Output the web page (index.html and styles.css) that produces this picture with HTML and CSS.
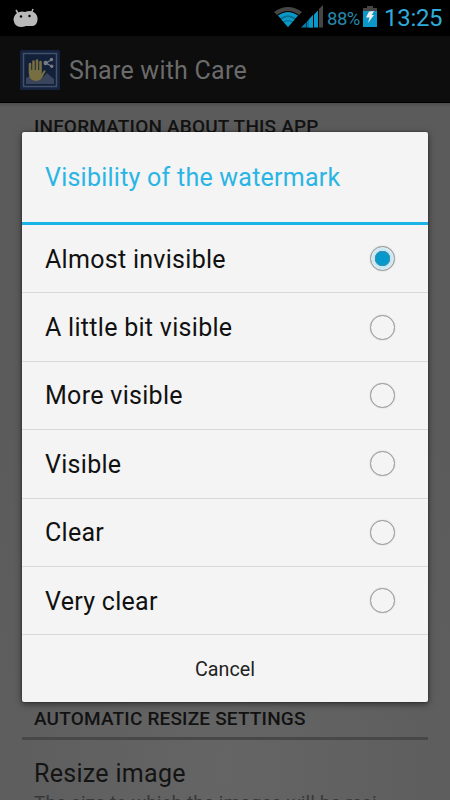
FILE: index.html
```html
<!DOCTYPE html>
<html lang="en">
<head>
<meta charset="utf-8">
<title>Share with Care</title>
<link rel="stylesheet" href="styles.css">
</head>
<body>
<div class="screen">
  <header class="status">
    <svg class="droid" width="26" height="20" viewBox="0 0 26 20"><path d="M3 2l3 5M20 1l-2 5" stroke="#b9b9b9" stroke-width="1.5"/><path d="M4 5Q8 2.500 12 4Q18 1.500 22 5Q25 8 24.500 12Q24 17 20 18H13Q8 20 4 18Q1 16 .5 12Q.5 8 4 5Z" fill="#b9b9b9"/><circle cx="8" cy="8.500" r="1.200"/><circle cx="16.500" cy="8" r="1.200"/></svg>
    <div class="indicators">
      <svg class="wifi" width="28" height="22" viewBox="0 0 28 22"><path d="M0 5Q14-5 28 5L25 8Q14 0 3 8Z" fill="#454545"/><path d="M4 8.500Q14 1.500 24 8.500L19 14.500L14 20L9 14.500Z" fill="#0a6d8e"/><path d="M4 8.500Q14 1.500 24 8.500L21.500 11Q14 5.500 6.500 11Z" fill="#0b98c8"/><path d="M7.500 12.500Q14 7.500 20.500 12.500L18.500 14.500Q14 11.500 9.500 14.500Z" fill="#0b98c8"/><path d="M10 15.500Q14 13 18 15.500L14 20Z" fill="#0b98c8"/></svg>
      <svg class="signal" width="22" height="23" viewBox="0 0 22 23"><path d="M0 22.500L5.500 17V22.500Z" fill="#087ba8"/><path d="M6 16.500L12 10V22.500H6Z" fill="#087ba8"/><path d="M8 14.500L12 10V22.500H8Z" fill="#0b98c8"/><path d="M13 9.500L17 5.500V22.500H13Z" fill="#0b98c8"/><path d="M18 4L22 0V22.500H18Z" fill="#454545"/></svg>
      <span class="percent">88%</span>
      <svg class="battery" width="14" height="21" viewBox="0 0 14 21"><path d="M4 0h6v2h4v3H0V2h4Z" fill="#454545"/><path d="M0 5h14v16H0Z" fill="#0b98c8"/><path d="M6 5.500L11 5L8.800 9H11L5 17L6.500 11.500H3Z" fill="#eee"/></svg>
      <span class="clock">13:25</span>
    </div>
  </header>
  <div class="appbar">
    <svg class="logo" width="40" height="40" viewBox="0 0 40 40"><rect width="40" height="40" rx="1.500" fill="#15233f"/><rect x="3.500" y="3.500" width="33" height="33" fill="#12203a" stroke="#435069" stroke-width="1.500"/><path d="M6 34V28L12 25L21 29L27 23L34 29V34Z" fill="#3a445a"/><path d="M10 23V14M13.500 22V11.500M17 22V10.500M20.500 22V12" stroke="#776e42" stroke-width="2.600" stroke-linecap="round"/><path d="M9 20H21.500V24L24 20.500Q25.500 19.500 25.500 21.500L22 28Q20 31 15.500 31Q9 30 9 24Z" fill="#776e42"/><path d="M32 9.500L26 13L32 16.500" fill="none" stroke="#777c87" stroke-width="1.200"/><circle cx="31.500" cy="9.500" r="1.700" fill="#777c87"/><circle cx="25.700" cy="13" r="2.200" fill="#777c87"/><circle cx="31.700" cy="16.200" r="1.700" fill="#777c87"/></svg>
    <h1>Share with Care</h1>
  </div>
  <main class="settings">
    <h2 class="first">INFORMATION ABOUT THIS APP</h2>
    <section class="resize">
      <h2>AUTOMATIC RESIZE SETTINGS</h2>
      <p class="pref">Resize image</p>
      <p class="desc">The size to which the images will be resi</p>
    </section>
  </main>
  <div class="dialog">
    <h2 class="title">Visibility of the watermark</h2>
    <ul>
      <li><span>Almost invisible</span><i class="radio on"></i></li>
      <li><span>A little bit visible</span><i class="radio"></i></li>
      <li><span>More visible</span><i class="radio"></i></li>
      <li><span>Visible</span><i class="radio"></i></li>
      <li><span>Clear</span><i class="radio"></i></li>
      <li><span>Very clear</span><i class="radio"></i></li>
    </ul>
    <button class="cancel">Cancel</button>
  </div>
</div>
</body>
</html>
```
FILE: styles.css
```css
* { box-sizing: border-box; margin: 0; padding: 0; }
body { font-family: Roboto, "Liberation Sans", sans-serif; background: #000; }
.screen { position: relative; width: 450px; height: 800px; overflow: hidden; display: flex; flex-direction: column; }
.status { height: 36px; flex: none; background: #000; display: flex; justify-content: space-between; padding: 0 9px 0 13px; }
.droid { margin-top: 8px; }
.indicators { display: flex; }
.wifi { margin-top: 7px; }
.signal { margin: 5px 4px 0 -1px; }
.percent { font-size: 18.500px; line-height: 38px; color: #2689ac; width: 34px; letter-spacing: -.5px; }
.battery { margin: 6px 7px 0 2px; }
.clock { font-size: 24px; line-height: 37px; width: 57px; white-space: nowrap; letter-spacing: -.3px; color: #2fabd9; }
.appbar { height: 67px; flex: none; background: #0d0d0d; border-bottom: 1px solid #000; display: flex; align-items: center; padding: 1px 20px 0; gap: 9px; }
h1 { font-size: 25px; font-weight: 400; color: #6b6b6b; white-space: nowrap; letter-spacing: .24px; padding-top: 1px; }
.settings { flex: 1; background: linear-gradient(#4d4d4d, transparent 4px), radial-gradient(ellipse 300px 500px at 50% 95%, #656565, #5b5b5b); display: flex; flex-direction: column; justify-content: space-between; padding: 0 22px; overflow: hidden; }
.settings h2 { font-size: 19px; font-weight: 500; color: #121212; padding-left: 12px; white-space: nowrap; line-height: 24px; letter-spacing: .18px; }
.settings .first { padding-top: 12px; }
.resize { height: 94px; flex: none; overflow: hidden; }
.resize h2 { height: 34px; padding-top: 1px; border-bottom: 3px solid #484848; }
.pref { font-size: 25px; line-height: 30px; padding: 19px 0 0 12px; color: #141414; letter-spacing: .3px; }
.desc { font-size: 19px; line-height: 28px; padding-left: 12px; color: #383838; white-space: nowrap; letter-spacing: .1px; }
.dialog { position: absolute; left: 22px; top: 132px; width: 406px; height: 570px; display: flex; flex-direction: column; background: #f4f4f4; border-radius: 2px; box-shadow: 0 2px 7px rgba(0,0,0,.5), 0 0 2px rgba(0,0,0,.5); color: #080808; }
.title { height: 93px; border-bottom: 3px solid #1ab3e6; padding-left: 23px; font-size: 25px; line-height: 92px; font-weight: 400; color: #2ab5e5; white-space: nowrap; letter-spacing: .24px; }
ul { list-style: none; }
li { height: 68.400px; border-bottom: 1px solid #d9d9d9; display: flex; align-items: center; justify-content: space-between; padding: 0 33px 0 23px; font-size: 25px; color: #111; white-space: nowrap; letter-spacing: .29px; }
li span { padding-top: 1px; }
.radio { width: 25px; height: 25px; border: 1.500px solid #949494; border-radius: 50%; box-shadow: 0 0 1px #949494; }
.on { background: radial-gradient(circle, #0799cc 0 6.500px, #3a8eae 7px 7.500px, #c7e7f3 8px 9px, #e3f0f4 12px); }
.cancel { flex: 1; border: 0; padding-top: 1px; background: none; font: 400 19.700px Roboto, sans-serif; color: #222; }
```
